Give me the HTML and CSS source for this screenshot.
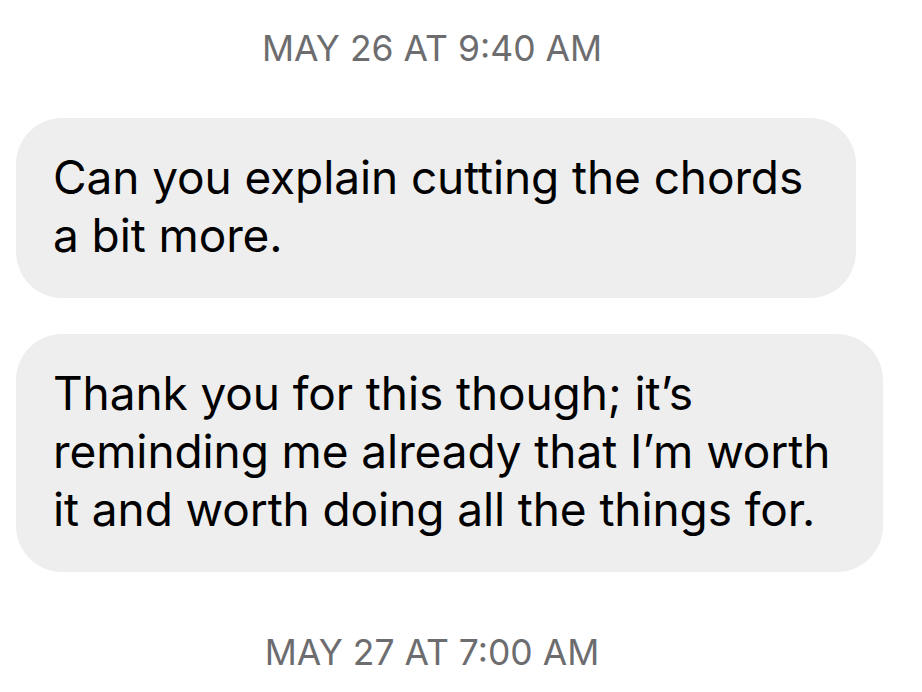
FILE: index.html
```html
<!DOCTYPE html>
<html lang="en">
<head>
<meta charset="utf-8">
<title>Messages</title>
<link rel="stylesheet" href="styles.css">
</head>
<body>
<main class="thread">
  <div class="stamp stamp-first">MAY 26 AT 9:40 AM</div>
  <div class="bubble bubble-a">Can you explain cutting the chords<br>a bit more.</div>
  <div class="bubble bubble-b">Thank you for this though; it’s<br>reminding me already that I’m worth<br>it and worth doing all the things for.</div>
  <div class="stamp stamp-last">MAY 27 AT 7:00 AM</div>
</main>
</body>
</html>
```

FILE: styles.css
```css
html, body {
  margin: 0;
  padding: 0;
  background: #ffffff;
}

.thread {
  width: 922px;
  height: 692px;
  overflow: hidden;
  box-sizing: border-box;
  padding: 0 16px;
  display: flex;
  flex-direction: column;
  align-items: flex-start;
  font-family: Inter, "Liberation Sans", sans-serif;
}

.stamp {
  width: 832px;
  text-align: center;
  font-size: 35.5px;
  line-height: 44px;
  font-weight: 400;
  color: #6d6d70;
}

.stamp-first {
  margin-top: 27px;
}

.stamp-last {
  margin-top: 59px;
}

.bubble {
  box-sizing: border-box;
  background: #eeeeee;
  color: #000000;
  border-radius: 46px;
  font-size: 46px;
  line-height: 58px;
  padding: 30px 37px 34px;
  letter-spacing: -0.1px;
}

.bubble-a {
  width: 840px;
  margin-top: 47px;
}

.bubble-b {
  width: 867px;
  margin-top: 36px;
}
```
